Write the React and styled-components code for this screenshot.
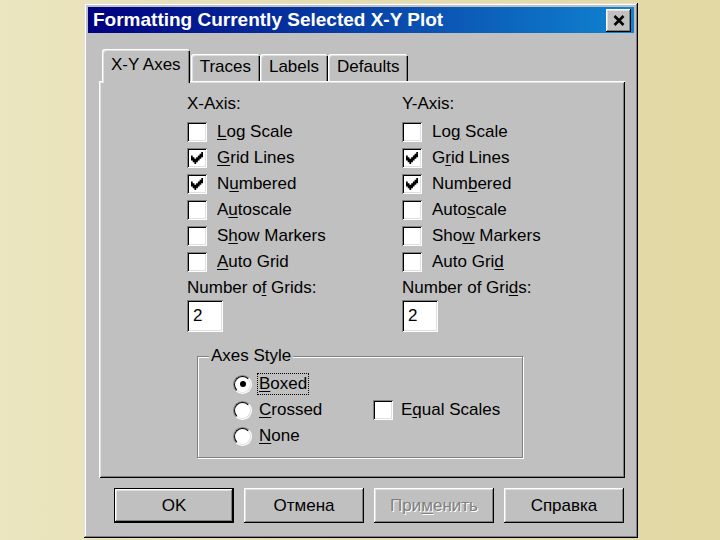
import React from "react";
import styled, { createGlobalStyle, css } from "styled-components";

const GlobalStyle = createGlobalStyle`
  html, body {
    margin: 0;
    padding: 0;
  }
  body {
    font-family: "Liberation Sans", Arial, sans-serif;
    font-size: 17px;
    color: #000;
  }
`;

const raised = css`
  box-shadow: inset -1px -1px #000, inset 1px 1px #fff, inset -2px -2px #808080,
    inset 2px 2px #dfdfdf;
`;

const sunken = css`
  box-shadow: inset 1px 1px #808080, inset -1px -1px #fff, inset 2px 2px #000,
    inset -2px -2px #dfdfdf;
`;

const Page = styled.div`
  width: 720px;
  height: 540px;
  overflow: hidden;
  box-sizing: border-box;
  padding: 3px 0 0 84px;
  background: linear-gradient(90deg, #ebe5c0 0%, #e5ddad 40%, #e2d9a5 100%);
`;

const Window = styled.div`
  width: 554px;
  height: 535px;
  box-sizing: border-box;
  padding: 4px;
  background: #c0c0c0;
  box-shadow: inset -1px -1px #000, inset 1px 1px #dfdfdf, inset -2px -2px #808080,
    inset 2px 2px #fff;
  display: flex;
  flex-direction: column;
`;

const TitleBar = styled.div`
  height: 26px;
  flex: none;
  display: flex;
  align-items: center;
  justify-content: space-between;
  padding: 0 3px 0 5px;
  background: linear-gradient(90deg, #000080, #1084d0);
`;

const Title = styled.span`
  color: #fff;
  font-weight: bold;
  font-size: 19px;
  line-height: 26px;
  white-space: nowrap;
`;

const CloseButton = styled.div`
  width: 25px;
  height: 23px;
  background: #c0c0c0;
  ${raised};
  display: flex;
  align-items: center;
  justify-content: center;
`;

const Body = styled.div`
  padding: 16px 9px 0 11px;
`;

const Tabs = styled.div`
  display: flex;
  align-items: flex-end;
  margin-left: 3px;
`;

const Tab = styled.div`
  position: relative;
  z-index: 1;
  box-sizing: border-box;
  background: #c0c0c0;
  padding: 3px 9px 0 9px;
  height: 27px;
  line-height: 20px;
  white-space: nowrap;
  border-radius: 3px 3px 0 0;
  box-shadow: inset 1px 1px #fff, inset 2px 2px #dfdfdf, inset -1px 0 #000,
    inset -2px 0 #808080;
  ${({ $active }) =>
    $active &&
    css`
      height: 34px;
      padding-top: 6px;
      margin-bottom: -2px;
      margin-right: 1px;
      z-index: 2;
    `}
`;

const Panel = styled.div`
  height: 397px;
  box-sizing: border-box;
  padding: 13px 0 0 88px;
  background: #c0c0c0;
  box-shadow: inset 1px 1px #fff, inset -1px -1px #000, inset 2px 2px #dfdfdf,
    inset -2px -2px #808080;
  display: grid;
  grid-template-columns: 215px 1fr;
  align-content: start;
`;

const Column = styled.div`
  display: flex;
  flex-direction: column;
  align-items: flex-start;
`;

const Heading = styled.div`
  line-height: 20px;
  margin-bottom: 5px;
`;

const CheckRow = styled.div`
  display: flex;
  align-items: center;
  height: 26px;
  white-space: nowrap;
`;

const Box = styled.span`
  width: 20px;
  height: 20px;
  flex: none;
  margin-right: ${({ $gap }) => $gap ?? 8}px;
  background: #fff;
  ${sunken};
  display: flex;
  align-items: center;
  justify-content: center;
`;

const Radio = styled.span`
  position: relative;
  width: 19px;
  height: 19px;
  flex: none;
  box-sizing: border-box;
  margin-right: 5px;
  border-radius: 50%;
  background: #fff;
  border: 1px solid;
  border-color: #808080 #fff #fff #808080;
  &::before {
    content: "";
    position: absolute;
    inset: 0;
    border-radius: 50%;
    border: 1px solid;
    border-color: #000 #dfdfdf #dfdfdf #000;
  }
  ${({ $checked }) =>
    $checked &&
    css`
      &::after {
        content: "";
        position: absolute;
        left: 50%;
        top: 50%;
        width: 6px;
        height: 6px;
        margin: -3px 0 0 -3px;
        border-radius: 50%;
        background: #000;
      }
    `}
`;

const Label = styled.span`
  line-height: 20px;
  padding: 0 1px;
  border: 1px solid transparent;
  ${({ $focus }) =>
    $focus &&
    css`
      border: 1px dotted #000;
    `}
`;

const Key = styled.span`
  text-decoration: underline;
  text-underline-offset: 2px;
`;

const NumLabel = styled.div`
  height: 25px;
  line-height: 25px;
`;

const NumInput = styled.div`
  width: 36px;
  height: 32px;
  box-sizing: border-box;
  padding-left: 6px;
  line-height: 32px;
  background: #fff;
  ${sunken};
`;

const Group = styled.fieldset`
  grid-column: 1 / -1;
  width: 326px;
  box-sizing: border-box;
  margin: 14px 0 0 10px;
  padding: 5px 0 8px 11px;
  border: 1px solid #808080;
  box-shadow: inset 1px 1px #fff, 1px 1px #fff;
`;

const Legend = styled.legend`
  padding: 0 2px;
  line-height: 20px;
  background: #c0c0c0;
`;

const GroupGrid = styled.div`
  display: grid;
  grid-template-columns: 140px auto;
  grid-auto-rows: 26px;
  margin-left: 24px;
`;

const Cell = styled.div`
  display: flex;
  align-items: center;
  white-space: nowrap;
  grid-column: ${({ $col }) => $col || 1};
  grid-row: ${({ $row }) => $row || "auto"};
`;

const Buttons = styled.div`
  display: flex;
  gap: 10px;
  margin: 10px 0 0 15px;
`;

const Button = styled.div`
  width: 120px;
  height: 35px;
  box-sizing: border-box;
  display: flex;
  align-items: center;
  justify-content: center;
  background: #c0c0c0;
  ${raised};
  ${({ $default }) =>
    $default &&
    css`
      box-shadow: inset 0 0 0 1px #000, inset -2px -2px #000, inset 2px 2px #fff,
        inset -3px -3px #808080, inset 3px 3px #dfdfdf;
    `}
  ${({ $disabled }) =>
    $disabled &&
    css`
      color: #808080;
      text-shadow: 1px 1px #fff;
    `}
`;

const CheckMark = () => (
  <svg width="12" height="12" viewBox="0 0 7 7">
    <path
      d="M0 2h1v1h1v1h1V3h1V2h1V1h1V0h1v3H6v1H5v1H4v1H3v1H2V6H1V5H0z"
      fill="#000"
    />
  </svg>
);

const CloseIcon = () => (
  <svg width="12" height="11" viewBox="0 0 12 11">
    <path d="M1.5 1 L10.5 10 M10.5 1 L1.5 10" stroke="#000" strokeWidth="2.6" />
  </svg>
);

const Check = ({ checked, gap, children }) => (
  <CheckRow>
    <Box $gap={gap}>{checked && <CheckMark />}</Box>
    <Label>{children}</Label>
  </CheckRow>
);

const axisItems = {
  x: [
    [false, "", "L", "og Scale"],
    [true, "", "G", "rid Lines"],
    [true, "N", "u", "mbered"],
    [false, "A", "u", "toscale"],
    [false, "S", "h", "ow Markers"],
    [false, "", "A", "uto Grid"],
  ],
  y: [
    [false, "Lo", "g", " Scale"],
    [true, "G", "r", "id Lines"],
    [true, "Num", "b", "ered"],
    [false, "Auto", "s", "cale"],
    [false, "Sho", "w", " Markers"],
    [false, "Auto Gri", "d", ""],
  ],
};

const Axis = ({ title, items, grids }) => (
  <Column>
    <Heading>{title}</Heading>
    {items.map(([checked, pre, key, post]) => (
      <Check key={pre + key + post} checked={checked}>
        {pre}
        <Key>{key}</Key>
        {post}
      </Check>
    ))}
    <NumLabel>{grids}</NumLabel>
    <NumInput>2</NumInput>
  </Column>
);

export default function App() {
  return (
    <>
      <GlobalStyle />
      <Page>
        <Window>
          <TitleBar>
            <Title>Formatting Currently Selected X-Y Plot</Title>
            <CloseButton>
              <CloseIcon />
            </CloseButton>
          </TitleBar>
          <Body>
            <Tabs>
              <Tab $active>X-Y Axes</Tab>
              <Tab>Traces</Tab>
              <Tab>Labels</Tab>
              <Tab>Defaults</Tab>
            </Tabs>
            <Panel>
              <Axis
                title="X-Axis:"
                items={axisItems.x}
                grids={
                  <>
                    Number o<Key>f</Key> Grids:
                  </>
                }
              />
              <Axis
                title="Y-Axis:"
                items={axisItems.y}
                grids={
                  <>
                    Number of Gri<Key>d</Key>s:
                  </>
                }
              />
              <Group>
                <Legend>Axes Style</Legend>
                <GroupGrid>
                  <Cell $row={1}>
                    <Radio $checked />
                    <Label $focus>
                      <Key>B</Key>oxed
                    </Label>
                  </Cell>
                  <Cell $row={2}>
                    <Radio />
                    <Label>
                      <Key>C</Key>rossed
                    </Label>
                  </Cell>
                  <Cell $row={3}>
                    <Radio />
                    <Label>
                      <Key>N</Key>one
                    </Label>
                  </Cell>
                  <Cell $row={2} $col={2}>
                    <Box $gap={6} />
                    <Label>
                      E<Key>q</Key>ual Scales
                    </Label>
                  </Cell>
                </GroupGrid>
              </Group>
            </Panel>
            <Buttons>
              <Button $default>OK</Button>
              <Button>Отмена</Button>
              <Button $disabled>
                <span>
                  При<Key>м</Key>енить
                </span>
              </Button>
              <Button>Справка</Button>
            </Buttons>
          </Body>
        </Window>
      </Page>
    </>
  );
}
